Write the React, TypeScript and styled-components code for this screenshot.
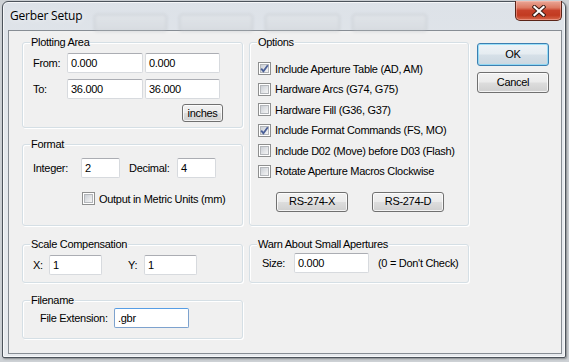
import React from "react";
import styled, { createGlobalStyle } from "styled-components";

const Global = createGlobalStyle`
  html, body { margin: 0; padding: 0; }
  body {
    width: 569px; height: 362px; overflow: hidden;
    background: #cdd1d5;
    font-family: "Liberation Sans", Arial, sans-serif;
    font-size: 11px;
    letter-spacing: -0.3px;
    color: #000;
  }
  * { box-sizing: border-box; }
`;

const Window = styled.div`
  margin: 1px 0 0 2px;
  width: 564px;
  height: 357px;
  border: 1px solid #4c535b;
  border-radius: 6px 6px 2px 2px;
  background: linear-gradient(180deg, #dde2e8 0%, #e4e8ec 40%, #e7eaee 100%);
  box-shadow: inset 0 0 0 1px rgba(255, 255, 255, 0.7), 1px 1px 2px rgba(0, 0, 0, 0.35);
  padding: 0 3px 3px 5px;
  display: flex;
  flex-direction: column;
`;

const TitleBar = styled.div`
  height: 28px;
  display: flex;
  align-items: flex-start;
`;

const Title = styled.div`
  font-family: "Open Sans", "Noto Sans", sans-serif;
  font-size: 12px;
  line-height: 16px;
  padding: 6px 0 0 2px;
  width: 86px;
  color: #000;
  text-shadow: 0 0 6px rgba(255, 255, 255, 0.9);
  letter-spacing: -0.2px;
`;

const Ghosts = styled.div`
  display: flex;
  gap: 12px;
  padding-top: 12px;
  filter: blur(1.5px);
  opacity: 0.3;
`;

const Ghost = styled.div<{ $w: number }>`
  width: ${(p) => p.$w}px;
  height: 18px;
  border: 1px solid #8a9096;
  border-radius: 3px;
  background: linear-gradient(180deg, #e6e8ea, #c9ccd0);
`;

const CloseButton = styled.div`
  margin-left: auto;
  margin-top: -1px;
  width: 47px;
  height: 20px;
  border: 1px solid #5a2418;
  border-top: none;
  border-radius: 0 0 5px 5px;
  background: linear-gradient(180deg, #e9a797 0%, #dd7a63 35%, #c7412a 50%, #c23a21 75%, #d7684c 100%);
  box-shadow: inset 0 0 0 1px rgba(255, 200, 190, 0.45);
  display: flex;
  align-items: center;
  justify-content: center;
`;

const Client = styled.div`
  flex: 1;
  border: 1px solid #878d94;
  background: #f0f0f0;
  padding: 11px 0 0 13px;
  display: grid;
  grid-template-columns: 221px 220px 72px;
  column-gap: 6px;
  align-items: start;
`;

const LeftCol = styled.div`
  display: flex;
  flex-direction: column;
`;

const MidCol = styled.div`
  display: flex;
  flex-direction: column;
`;

const RightCol = styled.div`
  display: flex;
  flex-direction: column;
  margin-left: 2px;
  padding-top: 1px;
`;

const Group = styled.div<{ $h: number; $mt?: number }>`
  position: relative;
  height: ${(p) => p.$h}px;
  margin-top: ${(p) => p.$mt ?? 0}px;
  border: 1px solid #d5dfe5;
  border-radius: 3px;
  box-shadow: inset 1px 1px 0 #fff, 1px 1px 0 #fff;
`;

const Legend = styled.div`
  position: absolute;
  top: -7px;
  left: 7px;
  padding: 0 1px;
  line-height: 13px;
  background: #f0f0f0;
  white-space: nowrap;
`;

const Body = styled.div<{ $pt: number; $pl: number }>`
  padding: ${(p) => p.$pt}px 0 0 ${(p) => p.$pl}px;
  display: flex;
  flex-direction: column;
`;

const Row = styled.div<{ $mt?: number; $pl?: number; $end?: boolean; $gap?: number }>`
  display: flex;
  align-items: center;
  margin-top: ${(p) => p.$mt ?? 0}px;
  padding-left: ${(p) => p.$pl ?? 0}px;
  justify-content: ${(p) => (p.$end ? "flex-end" : "flex-start")};
  gap: ${(p) => p.$gap ?? 0}px;
`;

const Label = styled.span<{ $w?: number }>`
  display: inline-block;
  width: ${(p) => (p.$w ? `${p.$w}px` : "auto")};
  white-space: nowrap;
  line-height: 13px;
`;

const Input = styled.div<{ $w: number; $focus?: boolean; $ml?: number }>`
  width: ${(p) => p.$w}px;
  height: 20px;
  margin-left: ${(p) => p.$ml ?? 0}px;
  background: #fff;
  border: 1px solid ${(p) => (p.$focus ? "#7da2ce" : "#d7dade")};
  border-top-color: ${(p) => (p.$focus ? "#569de5" : "#abadb3")};
  border-radius: 2px;
  padding: 0 0 0 3px;
  line-height: 18px;
  white-space: nowrap;
`;

const Button = styled.div<{ $w: number; $h: number; $mt?: number; $default?: boolean }>`
  width: ${(p) => p.$w}px;
  height: ${(p) => p.$h}px;
  margin-top: ${(p) => p.$mt ?? 0}px;
  border: 1px solid ${(p) => (p.$default ? "#3c7fb1" : "#707070")};
  border-radius: 3px;
  background: ${(p) =>
    p.$default
      ? "linear-gradient(180deg, #eef3f7 0%, #e5ecf1 48%, #d6e0e8 52%, #cbd7e0 100%)"
      : "linear-gradient(180deg, #f2f2f2 0%, #ebebeb 48%, #dddddd 52%, #cfcfcf 100%)"};
  box-shadow: inset 0 0 0 1px ${(p) => (p.$default ? "rgba(120, 215, 250, 0.7)" : "rgba(255, 255, 255, 0.75)")};
  display: flex;
  align-items: center;
  justify-content: center;
  line-height: 13px;
  white-space: nowrap;
`;

const CheckRow = styled.div<{ $mt?: number; $pl?: number }>`
  display: flex;
  align-items: center;
  height: 13px;
  margin-top: ${(p) => p.$mt ?? 0}px;
  padding-left: ${(p) => p.$pl ?? 0}px;
  gap: 4px;
  white-space: nowrap;
`;

const Box = styled.span`
  position: relative;
  width: 13px;
  height: 13px;
  flex: none;
  border: 1px solid #8e8f8f;
  background: #fff;
  padding: 1px;
`;

const BoxInner = styled.span`
  display: block;
  width: 9px;
  height: 9px;
  border: 1px solid #b4b7bb;
  background: linear-gradient(135deg, #cbcfd5 0%, #e2e4e7 55%, #f5f5f5 100%);
`;

const Tick = styled.svg`
  position: absolute;
  left: 1px;
  top: 1px;
`;

const Check = ({ checked }: { checked?: boolean }) => (
  <Box>
    <BoxInner />
    {checked && (
      <Tick width="9" height="9" viewBox="0 0 9 9">
        <path d="M1.2 4.6 L3.4 7.2 L7.8 1.3" fill="none" stroke="#4a5f97" strokeWidth="1.8" />
      </Tick>
    )}
  </Box>
);

const OptionsList = styled.div`
  display: flex;
  flex-direction: column;
  gap: 7.6px;
  padding: 19px 0 0 8px;
`;

const options: { label: string; checked: boolean }[] = [
  { label: "Include Aperture Table (AD, AM)", checked: true },
  { label: "Hardware Arcs (G74, G75)", checked: false },
  { label: "Hardware Fill (G36, G37)", checked: false },
  { label: "Include Format Commands (FS, MO)", checked: true },
  { label: "Include D02 (Move) before D03 (Flash)", checked: false },
  { label: "Rotate Aperture Macros Clockwise", checked: false },
];

export default function App() {
  return (
    <>
      <Global />
      <Window>
        <TitleBar>
          <Title>Gerber Setup</Title>
          <Ghosts>
            <Ghost $w={73} />
            <Ghost $w={74} />
            <Ghost $w={75} />
            <Ghost $w={75} />
          </Ghosts>
          <CloseButton>
            <svg width="14" height="12" viewBox="0 0 14 12">
              <path d="M2.5 2 L11.5 10 M11.5 2 L2.5 10" stroke="#3b1d16" strokeWidth="4.2" strokeLinecap="square" />
              <path d="M2.5 2 L11.5 10 M11.5 2 L2.5 10" stroke="#fff" strokeWidth="2.2" strokeLinecap="square" />
            </svg>
          </CloseButton>
        </TitleBar>
        <Client>
          <LeftCol>
            <Group $h={86}>
              <Legend>Plotting Area</Legend>
              <Body $pt={10} $pl={10}>
                <Row>
                  <Label $w={34}>From:</Label>
                  <Input $w={76}>0.000</Input>
                  <Input $w={75} $ml={2}>0.000</Input>
                </Row>
                <Row $mt={6}>
                  <Label $w={34}>To:</Label>
                  <Input $w={76}>36.000</Input>
                  <Input $w={75} $ml={2}>36.000</Input>
                </Row>
                <Row $mt={5} $end>
                  <Button $w={41} $h={18} style={{ marginRight: 19 }}>inches</Button>
                </Row>
              </Body>
            </Group>
            <Group $h={82} $mt={16}>
              <Legend>Format</Legend>
              <Body $pt={13} $pl={10}>
                <Row>
                  <Label $w={48}>Integer:</Label>
                  <Input $w={39}>2</Input>
                  <Label $w={48} style={{ marginLeft: 9 }}>Decimal:</Label>
                  <Input $w={39}>4</Input>
                </Row>
                <CheckRow $mt={14} $pl={49}>
                  <Check />
                  <span>Output in Metric Units (mm)</span>
                </CheckRow>
              </Body>
            </Group>
            <Group $h={39} $mt={18}>
              <Legend>Scale Compensation</Legend>
              <Body $pt={10} $pl={10}>
                <Row>
                  <Label $w={16}>X:</Label>
                  <Input $w={53}>1</Input>
                  <Label $w={16} style={{ marginLeft: 26 }}>Y:</Label>
                  <Input $w={53}>1</Input>
                </Row>
              </Body>
            </Group>
            <Group $h={39} $mt={17}>
              <Legend>Filename</Legend>
              <Body $pt={7} $pl={17}>
                <Row>
                  <Label $w={74}>File Extension:</Label>
                  <Input $w={75} $focus>.gbr</Input>
                </Row>
              </Body>
            </Group>
          </LeftCol>
          <MidCol>
            <Group $h={184}>
              <Legend>Options</Legend>
              <OptionsList>
                {options.map((o) => (
                  <CheckRow key={o.label}>
                    <Check checked={o.checked} />
                    <span>{o.label}</span>
                  </CheckRow>
                ))}
              </OptionsList>
              <Row $mt={14} $pl={26} $gap={24}>
                <Button $w={72} $h={20}>RS-274-X</Button>
                <Button $w={72} $h={20}>RS-274-D</Button>
              </Row>
            </Group>
            <Group $h={39} $mt={18}>
              <Legend>Warn About Small Apertures</Legend>
              <Body $pt={8} $pl={12}>
                <Row>
                  <Label $w={32}>Size:</Label>
                  <Input $w={75}>0.000</Input>
                  <Label style={{ marginLeft: 9 }}>(0 = Don't Check)</Label>
                </Row>
              </Body>
            </Group>
          </MidCol>
          <RightCol>
            <Button $w={72} $h={23} $default>OK</Button>
            <Button $w={72} $h={21} $mt={6}>Cancel</Button>
          </RightCol>
        </Client>
      </Window>
    </>
  );
}
